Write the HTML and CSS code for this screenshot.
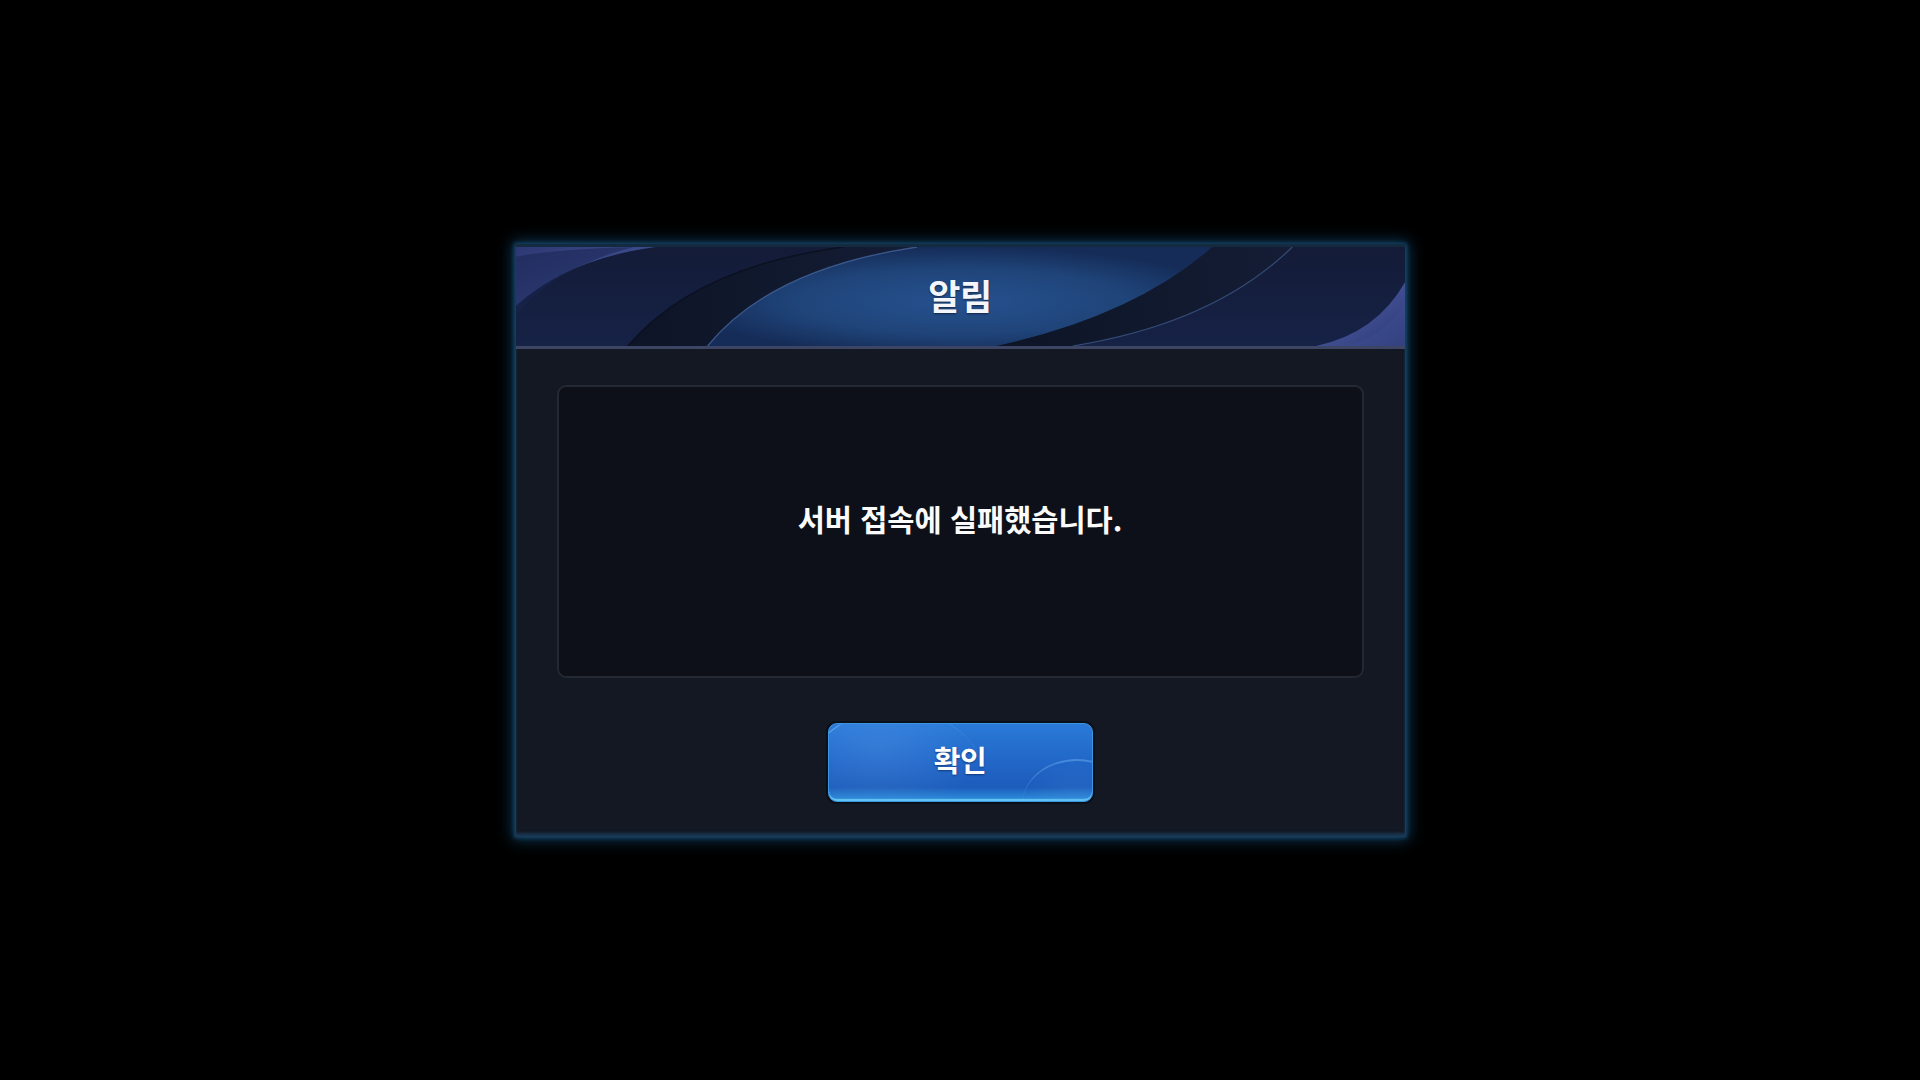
FILE: index.html
```html
<!DOCTYPE html>
<html lang="ko">
<head>
<meta charset="utf-8">
<title>알림</title>
<link rel="stylesheet" href="styles.css">
</head>
<body>
<div class="dialog">
  <div class="header">
    <svg class="header-bg" viewBox="0 0 891 101" preserveAspectRatio="none" aria-hidden="true">
      <defs>
        <radialGradient id="center" cx="0.5" cy="0.55" r="0.55">
          <stop offset="0" stop-color="#26518f"/>
          <stop offset="0.6" stop-color="#1f4479"/>
          <stop offset="1" stop-color="#152c58"/>
        </radialGradient>
        <linearGradient id="side" x1="0" y1="0" x2="0" y2="1">
          <stop offset="0" stop-color="#131b37"/>
          <stop offset="1" stop-color="#162246"/>
        </linearGradient>
        <linearGradient id="purple" x1="0" y1="0" x2="1" y2="1">
          <stop offset="0" stop-color="#2c3872"/>
          <stop offset="0.6" stop-color="#3f4f92"/>
          <stop offset="1" stop-color="#2a3670"/>
        </linearGradient>
        <linearGradient id="purple2" x1="1" y1="1" x2="0" y2="0">
          <stop offset="0" stop-color="#2b376f"/>
          <stop offset="0.5" stop-color="#414f94"/>
          <stop offset="1" stop-color="#263266"/>
        </linearGradient>
        <linearGradient id="band" x1="0" y1="0" x2="1" y2="0">
          <stop offset="0" stop-color="#0d1426"/>
          <stop offset="1" stop-color="#141d35"/>
        </linearGradient>
      </defs>
      <rect x="0" y="0" width="891" height="101" fill="url(#side)"/>
      <path d="M192,101 Q255,22 402,0 L698,0 Q620,70 482,101 Z" fill="url(#center)"/>
      <path d="M112,101 Q180,20 328,0 L402,0 Q255,22 192,101 Z" fill="url(#band)"/>
      <path d="M112,101 Q180,20 328,0" fill="none" stroke="#0a0f1c" stroke-width="1.5" opacity="0.8"/>
      <path d="M192,101 Q255,22 402,0" fill="none" stroke="#4a6ea8" stroke-width="1.4" opacity="0.7"/>
      <path d="M482,101 Q620,70 698,0 L778,0 Q700,78 558,101 Z" fill="url(#band)"/>
      <path d="M558,101 Q700,78 778,0" fill="none" stroke="#4b6aa0" stroke-width="1.2" opacity="0.6"/>
      <path d="M0,0 L140,0 Q52,12 0,60 Z" fill="url(#purple)"/>
      <path d="M0,10 Q40,2 118,0 Q40,20 0,70 Z" fill="#1a2450" opacity="0.55"/>
      <path d="M891,101 L802,101 Q862,88 891,36 Z" fill="url(#purple2)"/>
      <path d="M891,58 Q870,92 830,101 L891,101 Z" fill="#3c4b8f" opacity="0.5"/>
    </svg>
    <h1 class="title">알림</h1>
  </div>
  <div class="body">
    <div class="message-box">
      <p class="message">서버 접속에 실패했습니다.</p>
    </div>
    <button class="confirm" type="button"><span class="confirm-label">확인</span></button>
  </div>
</div>
</body>
</html>
```

FILE: styles.css
```css
* {
  box-sizing: border-box;
}

html, body {
  margin: 0;
  padding: 0;
  background: #000;
}

body {
  width: 1920px;
  height: 1080px;
  display: flex;
  align-items: center;
  justify-content: center;
  font-family: "Noto Sans CJK KR", "Noto Sans", sans-serif;
  color: #fff;
}

.dialog {
  width: 891px;
  height: 593px;
  display: flex;
  flex-direction: column;
  background: #131822;
  border: 1px solid #1b3a55;
  border-top: 3px solid #142a3e;
  box-shadow: 0 0 14px 3px rgba(24, 96, 150, 0.55), 0 0 4px 1px rgba(40, 120, 180, 0.5), inset 0 -3px 3px rgba(30, 90, 140, 0.45);
}

.header {
  position: relative;
  height: 102px;
  flex: 0 0 102px;
  display: flex;
  align-items: center;
  justify-content: center;
  padding-bottom: 3px;
  border-bottom: 3px solid #3c4563;
  overflow: hidden;
}

.header-bg {
  position: absolute;
  left: 0;
  top: 0;
  width: 100%;
  height: 100%;
  display: block;
}

.title {
  position: relative;
  margin: 0;
  font-size: 35px;
  font-weight: 700;
  line-height: 1;
  letter-spacing: -0.5px;
  color: #f4f6fb;
  text-shadow: 0 1px 2px rgba(0, 0, 0, 0.5);
}

.body {
  flex: 1;
  display: flex;
  flex-direction: column;
  align-items: center;
  padding: 36px 41px 0;
}

.message-box {
  width: 100%;
  height: 293px;
  display: flex;
  align-items: center;
  justify-content: center;
  padding-bottom: 24px;
  background: #0d1018;
  border: 2px solid #232833;
  border-radius: 9px;
}

.message {
  margin: 0;
  font-size: 29.5px;
  font-weight: 700;
  line-height: 1;
  letter-spacing: 0;
  color: #fbfbfb;
}

.confirm {
  position: relative;
  margin-top: 45px;
  width: 265px;
  height: 79px;
  padding: 0 0 4px;
  border: 1px solid #3a95e2;
  border-radius: 9px;
  background: linear-gradient(180deg, #2a7ad8 0%, #2268c9 45%, #1d5cbb 82%, #2a86d6 96%, #5cc0f0 100%);
  box-shadow: 0 0 0 2px #0a101a, inset 0 -2px 0 #62c4f2;
  font-family: "Noto Sans CJK KR", "Noto Sans", sans-serif;
  color: #fff;
  overflow: hidden;
  cursor: pointer;
}

.confirm::before {
  content: "";
  position: absolute;
  left: -20px;
  top: -14px;
  width: 170px;
  height: 120px;
  border-radius: 50%;
  border-left: 2px solid rgba(150, 200, 255, 0.4);
  border-top: 1px solid rgba(150, 200, 255, 0.2);
  background: radial-gradient(ellipse at 40% 30%, rgba(110, 170, 240, 0.22), rgba(110, 170, 240, 0) 70%);
}

.confirm::after {
  content: "";
  position: absolute;
  right: -40px;
  bottom: -50px;
  width: 110px;
  height: 90px;
  border-radius: 50%;
  border-top: 2px solid rgba(140, 200, 255, 0.35);
  background: radial-gradient(ellipse at 50% 50%, rgba(90, 160, 235, 0.2), rgba(90, 160, 235, 0) 70%);
}

.confirm-label {
  position: relative;
  font-size: 29px;
  font-weight: 700;
  line-height: 1;
  letter-spacing: -0.5px;
  text-shadow: 0 1px 2px rgba(0, 30, 80, 0.6);
}
```
